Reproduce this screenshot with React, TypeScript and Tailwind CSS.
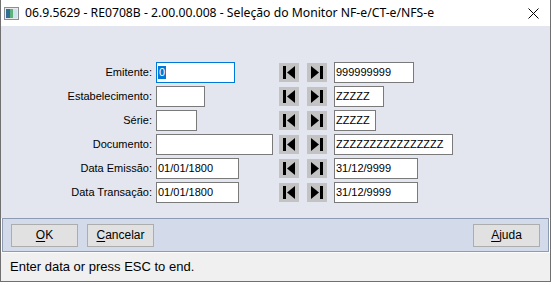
import React from 'react'

type Row = {
  label: string
  from: string
  to: string
  fromW: string
  toW: string
  focused?: boolean
}

const rows: Row[] = [
  { label: 'Emitente:', from: '0', to: '999999999', fromW: 'w-[79px]', toW: 'w-[80px]', focused: true },
  { label: 'Estabelecimento:', from: '', to: 'ZZZZZ', fromW: 'w-[49px]', toW: 'w-[50px]' },
  { label: 'Série:', from: '', to: 'ZZZZZ', fromW: 'w-[41px]', toW: 'w-[42px]' },
  { label: 'Documento:', from: '', to: 'ZZZZZZZZZZZZZZZZ', fromW: 'w-[117px]', toW: 'w-[119px]' },
  { label: 'Data Emissão:', from: '01/01/1800', to: '31/12/9999', fromW: 'w-[83px]', toW: 'w-[84px]' },
  { label: 'Data Transação:', from: '01/01/1800', to: '31/12/9999', fromW: 'w-[83px]', toW: 'w-[84px]' },
]

function NavButton({ dir }: { dir: 'first' | 'last' }) {
  return (
    <div className="w-[20px] h-[19px] bg-[#c3c3c3] flex items-center justify-center">
      <svg width="20" height="19" viewBox="0 0 20 19">
        {dir === 'first' ? (
          <>
            <rect x="4" y="3" width="3" height="13" fill="#000" />
            <polygon points="16,3 16,16 8,9.5" fill="#000" />
          </>
        ) : (
          <>
            <polygon points="4,3 4,16 12,9.5" fill="#000" />
            <rect x="13" y="3" width="3" height="13" fill="#000" />
          </>
        )}
      </svg>
    </div>
  )
}

function Field({ value, width, focused }: { value: string; width: string; focused?: boolean }) {
  return (
    <div
      className={`${width} h-[21px] bg-white border ${
        focused ? 'border-[#0078d7]' : 'border-[#7a7a7a]'
      } flex items-center pl-[1px] text-[11px] text-black leading-none`}
    >
      {focused ? <span className="bg-[#0078d7] text-white px-[1px] py-[1px]">{value}</span> : value}
    </div>
  )
}

function DlgButton({ underline, rest }: { underline: string; rest: string }) {
  return (
    <div className="w-[67px] h-[23px] bg-[#e1e1e1] border border-[#adadad] flex items-center justify-center text-[12px] text-black">
      <span>
        <span className="underline underline-offset-2">{underline}</span>
        {rest}
      </span>
    </div>
  )
}

export default function App() {
  return (
    <div className="w-[551px] h-[285px] bg-white overflow-hidden" style={{ fontFamily: '"Liberation Sans", Arial, sans-serif' }}>
      <div className="w-[551px] h-[282px] border-x border-b border-[#707070] flex flex-col">
        {/* Title bar */}
        <div className="h-[26px] bg-white flex items-center shrink-0">
          <svg className="ml-[3px]" width="15" height="13" viewBox="0 0 15 13">
            <rect x="0.5" y="0.5" width="14" height="12" fill="#e8eaec" stroke="#8a8f96" />
            <rect x="2" y="2" width="4" height="9" fill="#2f6f8f" />
            <rect x="6" y="2" width="3" height="9" fill="#5fb07a" />
            <rect x="9" y="2" width="4" height="9" fill="#cfe3ee" />
          </svg>
          <span className="ml-[6px] text-[12.2px] text-black" style={{ fontFamily: '"Noto Sans", sans-serif' }}>
            06.9.5629 - RE0708B - 2.00.00.008 - Seleção do Monitor NF-e/CT-e/NFS-e
          </span>
          <svg className="ml-auto mr-[11px]" width="11" height="11" viewBox="0 0 11 11">
            <path d="M0.5 0.5 L10.5 10.5 M10.5 0.5 L0.5 10.5" stroke="#000" strokeWidth="1" />
          </svg>
        </div>

        {/* Form body */}
        <div className="flex-1 bg-[#e3e6ee] pt-[36px]">
          <div className="grid grid-cols-[151px_127px_20px_20px_auto] gap-y-[3px] items-center">
            {rows.map((r) => (
              <React.Fragment key={r.label}>
                <div className="text-right text-[11px] text-black">{r.label}</div>
                <div className="ml-[4px]">
                  <Field value={r.from} width={r.fromW} focused={r.focused} />
                </div>
                <NavButton dir="first" />
                <div className="ml-[8px]">
                  <NavButton dir="last" />
                </div>
                <div className="ml-[15px]">
                  <Field value={r.to} width={r.toW} />
                </div>
              </React.Fragment>
            ))}
          </div>
        </div>

        {/* Button panel */}
        <div className="h-[34px] shrink-0 mx-[1px] bg-[#d3dbea] border border-[#8d9bb3] flex items-center px-[8px] gap-[9px]">
          <DlgButton underline="O" rest="K" />
          <DlgButton underline="C" rest="ancelar" />
          <div className="ml-auto">
            <DlgButton underline="A" rest="juda" />
          </div>
        </div>

        {/* Status bar */}
        <div className="h-[29px] shrink-0 bg-[#f0f0f0] border-t border-[#fbfbfb] flex items-center pl-[9px] text-[13px] text-black">
          Enter data or press ESC to end.
        </div>
      </div>
    </div>
  )
}
